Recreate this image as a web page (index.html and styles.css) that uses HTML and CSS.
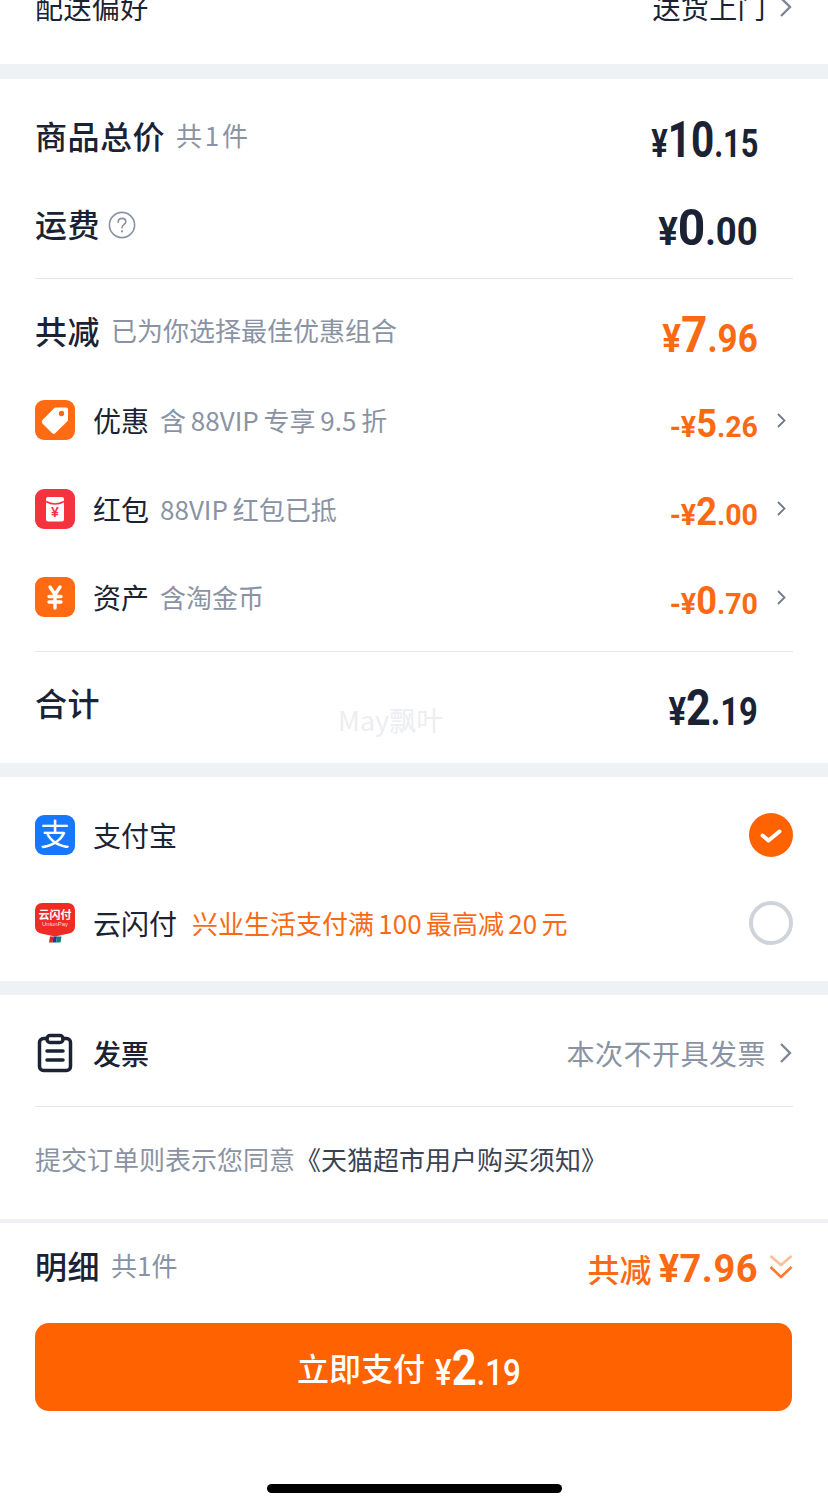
FILE: index.html
```html
<!DOCTYPE html>
<html lang="zh-CN">
<head>
<meta charset="utf-8">
<title>确认订单</title>
<link rel="stylesheet" href="styles.css">
</head>
<body>
<div class="page">
  <section class="card top-card">
    <div class="pref-row">
      <span class="label-regular">配送偏好</span>
      <span class="pref-value">送货上门
        <svg class="chev-lg" viewBox="0 0 14 22"><path d="M2 2l9 9-9 9"/></svg>
      </span>
    </div>
  </section>

  <section class="card price-card">
    <div class="row head first">
      <div class="left"><span class="title">商品总价</span><span class="sub sub-tight">共 1 件</span></div>
      <div class="price dark w-total"><span class="u">¥</span><span class="b">10</span><span class="u">.15</span></div>
    </div>
    <div class="row head">
      <div class="left"><span class="title">运费</span>
        <svg class="help" viewBox="0 0 28 28"><circle cx="14" cy="14" r="12.6"/><path d="M10.2 11.2c0-2.4 1.7-3.8 3.8-3.8s3.8 1.4 3.8 3.3c0 2.7-3.8 2.9-3.8 6"/><circle class="dot" cx="14" cy="20.4" r="1.1"/></svg>
      </div>
      <div class="price dark w-ship"><span class="u">¥</span><span class="b">0</span><span class="u">.00</span></div>
    </div>
    <hr class="rule">
    <div class="row head after-rule">
      <div class="left"><span class="title">共减</span><span class="sub">已为你选择最佳优惠组合</span></div>
      <div class="price orange w-off"><span class="u">¥</span><span class="b">7</span><span class="u">.96</span></div>
    </div>
    <div class="row sm">
      <div class="left">
        <svg class="ic" viewBox="0 0 40 40"><rect width="40" height="40" rx="9" fill="#ff6a13"/><path d="M21 7.5l10.200 0a1.800 1.800 0 0 1 1.800 1.800l0 10.200a3 3 0 0 1-.9 2.100L20.500 33a2.500 2.500 0 0 1-3.500 0L7.500 23.500a2.500 2.500 0 0 1 0-3.500L18.900 8.400A3 3 0 0 1 21 7.500z" fill="#fff"/><circle cx="26.500" cy="13.500" r="2.700" fill="#ff6a13"/></svg>
        <span class="name">优惠</span><span class="sub">含 88VIP 专享 9.5 折</span>
      </div>
      <div class="right"><div class="price orange small"><span class="u">-¥</span><span class="b">5</span><span class="u">.26</span></div><svg class="chev" viewBox="0 0 9 15"><path d="M1 1l6.500 6.500L1 14"/></svg></div>
    </div>
    <div class="row sm">
      <div class="left">
        <svg class="ic" viewBox="0 0 40 40"><rect width="40" height="40" rx="9" fill="#f5333f"/><rect x="11" y="8" width="18" height="24.500" rx="2" fill="#fff"/><path d="M11 12.500q9 5 18 0" fill="none" stroke="#f5333f" stroke-width="1.600"/><text class="ic-yen" x="20" y="27.500" text-anchor="middle">¥</text></svg>
        <span class="name">红包</span><span class="sub">88VIP 红包已抵</span>
      </div>
      <div class="right"><div class="price orange small"><span class="u">-¥</span><span class="b">2</span><span class="u">.00</span></div><svg class="chev" viewBox="0 0 9 15"><path d="M1 1l6.500 6.500L1 14"/></svg></div>
    </div>
    <div class="row sm">
      <div class="left">
        <svg class="ic" viewBox="0 0 40 40"><rect width="40" height="40" rx="9" fill="#ff6a13"/><path d="M15 10l5 7.500 5-7.500M14 19.500h12M14 25h12M20 18v13" fill="none" stroke="#fff" stroke-width="3.400" stroke-linecap="round" stroke-linejoin="round"/></svg>
        <span class="name">资产</span><span class="sub">含淘金币</span>
      </div>
      <div class="right"><div class="price orange small"><span class="u">-¥</span><span class="b">0</span><span class="u">.70</span></div><svg class="chev" viewBox="0 0 9 15"><path d="M1 1l6.500 6.500L1 14"/></svg></div>
    </div>
    <hr class="rule">
    <div class="row head after-rule">
      <div class="left"><span class="title">合计</span></div>
      <div class="price dark w-sum"><span class="u">¥</span><span class="b">2</span><span class="u">.19</span></div>
    </div>
    <span class="watermark">May飘叶</span>
  </section>

  <section class="card pay-card">
    <div class="row">
      <div class="left">
        <svg class="ic" viewBox="0 0 40 40"><rect width="40" height="40" rx="9" fill="#1677ff"/><text class="ali" x="20" y="30" text-anchor="middle">支</text></svg>
        <span class="name">支付宝</span>
      </div>
      <svg class="radio" viewBox="0 0 44 44"><circle cx="22" cy="22" r="22" fill="#ff6200"/><path d="M13.500 22.500l6 5 11-9" fill="none" stroke="#fff" stroke-width="4" stroke-linecap="round" stroke-linejoin="round"/></svg>
    </div>
    <div class="row">
      <div class="left">
        <svg class="ic" viewBox="0 0 40 40"><path d="M7 0h26a7 7 0 0 1 7 7v16q0 6-6 7.500l-14 3-14-3q-6-1.500-6-7.500V7a7 7 0 0 1 7-7z" fill="#ee2b24"/><text class="up-cn" x="20" y="15.500" text-anchor="middle">云闪付</text><text class="up-en" x="20" y="23" text-anchor="middle">UnionPay</text><path d="M15 33.500h3.500l-1 6H14z" fill="#d8232a"/><path d="M18.500 33.500h3.500l-1 6h-3.500z" fill="#1a3f8f"/><path d="M22 33.500h4.500l-1 6H21z" fill="#11807f"/></svg>
        <span class="name">云闪付</span><span class="promo">兴业生活支付满 100 最高减 20 元</span>
      </div>
      <svg class="radio" viewBox="0 0 44 44"><circle cx="22" cy="22" r="20" fill="#fff" stroke="#cfd4db" stroke-width="4"/></svg>
    </div>
  </section>

  <section class="card invoice-card">
    <div class="row">
      <div class="left">
        <svg class="ic clip" viewBox="0 0 40 40"><path d="M12 5.500H8.500a4 4 0 0 0-4 4v24a4 4 0 0 0 4 4h23a4 4 0 0 0 4-4v-24a4 4 0 0 0-4-4H28"/><rect x="12" y="2.500" width="16" height="7" rx="3"/><path d="M12 18h16M12 27h16"/></svg>
        <span class="name medium">发票</span>
      </div>
      <span class="invoice-val">本次不开具发票<svg class="chev-lg" viewBox="0 0 14 22"><path d="M2 2l9 9-9 9"/></svg></span>
    </div>
    <hr class="rule">
    <p class="terms">提交订单则表示您同意<span class="terms-link">《天猫超市用户购买须知》</span></p>
  </section>

  <footer class="footer">
    <div class="detail head">
      <div class="left"><span class="title">明细</span><span class="sub">共1件</span></div>
      <div class="detail-right">
        <span class="total-off">共减 <span class="total-num">¥7.96</span></span>
        <svg class="dbl" viewBox="0 0 24 28"><path class="fade" d="M1.500 3l10.500 9 10.500-9"/><path d="M1.500 14l10.500 10 10.500-10"/></svg>
      </div>
    </div>
    <button class="pay-btn">立即支付<span class="btn-price"><span class="u">¥</span><span class="b">2</span><span class="u">.19</span></span></button>
    <div class="home"></div>
  </footer>
</div>
</body>
</html>
```

FILE: styles.css
```css
* { box-sizing: border-box; }
html, body { margin: 0; padding: 0; }
body {
  background: #eff2f5;
  font-family: "Noto Sans CJK SC", "Liberation Sans", sans-serif;
  color: #1a2233;
}
.page {
  width: 828px;
  height: 1508px;
  overflow: hidden;
  display: flex;
  flex-direction: column;
}
.card { background: #fff; padding: 0 35px; position: relative; }

.top-card {
  height: 64px;
  display: flex;
  align-items: flex-end;
  padding-bottom: 42px;
}
.pref-row { width: 100%; height: 30px; display: flex; justify-content: space-between; align-items: center; flex: none; }
.label-regular, .pref-value { font-size: 28px; line-height: 30px; color: #1a2233; letter-spacing: 0.400px; }
.pref-value, .invoice-val { display: flex; align-items: center; gap: 13px; }

.price-card { margin-top: 15px; height: 684px; padding-top: 14px; }
.row { display: flex; justify-content: space-between; align-items: center; height: 88px; }
.row.after-rule { margin-top: 9px; height: 88px; }
.row.sm { height: 88.500px; }
.left { display: flex; align-items: center; }
.head .left { padding-bottom: 5px; }
.right { display: flex; align-items: center; gap: 19px; padding-right: 7px; }
.title { font-size: 32px; line-height: 40px; font-weight: 500; color: #1a2233; letter-spacing: 0.500px; }
.name { font-size: 28px; line-height: 40px; margin-left: 18px; color: #1a2233; }
.name.medium { font-weight: 500; }
.sub { font-size: 26px; line-height: 40px; color: #8a93a3; margin-left: 11px; white-space: pre; }
.name + .sub { margin-left: 11px; word-spacing: -1px; }
.sub-tight { word-spacing: -3px; }
.rule { border: 0; border-top: 1px solid #e4e7eb; margin: 9px 0 0; height: 0; }

.price {
  font-family: "Roboto", sans-serif;
  font-weight: 700;
  display: flex;
  align-items: baseline;
  line-height: 50px;
  position: relative;
  top: 5px;
  margin-right: 35px;
  transform-origin: right center;
}
.price .b { font-size: 50px; }
.price .u { font-size: 38px; }
.price.small { top: 5px; margin-right: 0; transform: scaleX(0.95); }
.price.small .b { font-size: 38px; }
.price.small .u { font-size: 30px; }
.w-total { transform: scaleX(0.81); }
.w-ship { transform: scaleX(0.96); }
.w-off { transform: scaleX(0.92); }
.w-sum { transform: scaleX(0.86); }
.dark { color: #1a2233; }
.orange { color: #fa6a15; }

.ic { width: 40px; height: 40px; flex: none; display: block; }
.help { width: 28px; height: 28px; margin: 5px 0 0 8px; fill: none; stroke: #8a93a3; stroke-width: 1.600; stroke-linecap: round; }
.help .dot { fill: #8a93a3; stroke: none; }
.chev { width: 9px; height: 15px; fill: none; stroke: #6f7a8c; stroke-width: 1.800; }
.chev-lg { width: 14px; height: 22px; fill: none; stroke: #7d8696; stroke-width: 2.400; margin-right: 0; }
.ic-yen { font: 700 14px "Liberation Sans", sans-serif; fill: #f5333f; }
.ali { font: 400 30px "Noto Sans CJK SC", sans-serif; fill: #fff; }
.up-cn { font: 700 11px "Noto Sans CJK SC", sans-serif; fill: #fff; }
.up-en { font: 400 6px "Liberation Sans", sans-serif; fill: #ffd9d6; }
.watermark {
  position: absolute;
  left: 338px;
  top: 624px;
  font-size: 27px;
  line-height: 34px;
  color: #eceef1;
}

.pay-card { margin-top: 14px; height: 204px; padding-top: 14px; }
.radio { width: 44px; height: 44px; flex: none; }
.promo { font-size: 26px; line-height: 40px; color: #fa6a15; margin-left: 15px; white-space: pre; word-spacing: -1.500px; }

.invoice-card { margin-top: 14px; height: 224px; padding-top: 14px; }
.clip { fill: none; stroke: #1a2233; stroke-width: 3.500; stroke-linecap: round; stroke-linejoin: round; }
.invoice-val { font-size: 28px; line-height: 40px; color: #8a93a3; letter-spacing: 0.500px; }
.terms { margin: 0; padding-top: 33px; font-size: 26px; line-height: 38px; color: #8a93a3; white-space: nowrap; }
.terms-link { color: #3a4353; margin-right: -3px; }

.footer { margin-top: 4px; flex: 1; background: #fff; padding: 0 35px; display: flex; flex-direction: column; }
.detail { display: flex; justify-content: space-between; align-items: center; height: 88px; }
.detail-right { display: flex; align-items: center; gap: 11px; }
.total-off { font-size: 32px; line-height: 40px; font-weight: 500; color: #fa6a15; white-space: pre; position: relative; top: 1px; }
.total-num { font-family: "Roboto", sans-serif; font-weight: 700; font-size: 38px; letter-spacing: 0.500px; }
.dbl { width: 24px; height: 28px; fill: none; stroke: #ff7a30; stroke-width: 2.600; }
.dbl .fade { stroke: #fbbd9a; }
.pay-btn {
  margin-top: 12px;
  height: 88px;
  width: 757px;
  flex: none;
  border: 0;
  border-radius: 14px;
  background: #ff6200;
  color: #fff;
  font: 500 32px "Noto Sans CJK SC", sans-serif;
  display: flex;
  align-items: center;
  justify-content: center;
  gap: 10px;
  padding: 0 0 0 4px;
}
.btn-price {
  font-family: "Roboto", sans-serif;
  display: flex;
  align-items: baseline;
  font-weight: 700;
  position: relative;
  top: 1px;
  transform: scaleX(0.87);
  transform-origin: left center;
}
.btn-price .b { font-size: 50px; }
.btn-price .u { font-size: 36px; font-weight: 500; }
.home { width: 295px; height: 9px; border-radius: 5px; background: #000; margin: 73px 0 0 232px; flex: none; }
```
